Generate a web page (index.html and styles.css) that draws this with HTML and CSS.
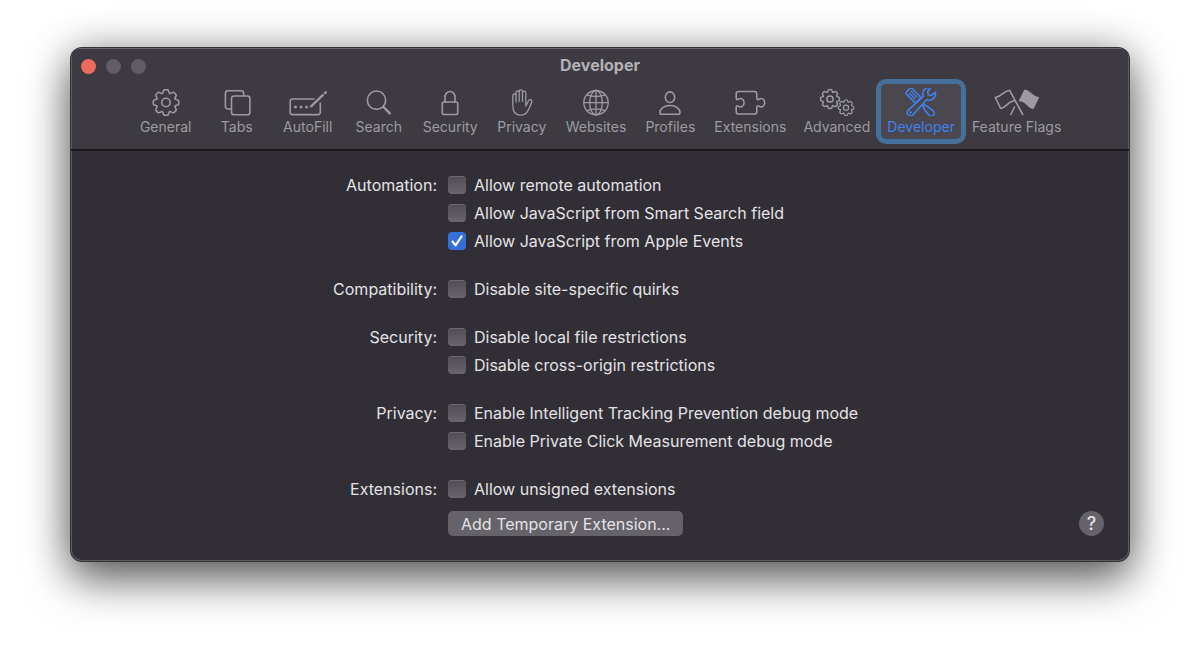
FILE: index.html
```
<!DOCTYPE html>
<html lang="en">
<head>
    <meta charset="UTF-8">
    <meta name="viewport" content="width=device-width, initial-scale=1.0">
    <title>Developer</title>
    <link rel="stylesheet" href="styles.css">
</head>
<body>
    <!-- gear shape shared by General and Advanced -->
    <svg class="defs" width="0" height="0" aria-hidden="true">
        <defs>
            <path id="tooth" d="M-3.75-9.05C-2.65-9.5-3-12.3-1.7-12.6Q0-13 1.7-12.6C3-12.3 2.65-9.5 3.75-9.05"/>
            <g id="gear">
                <use href="#tooth"/>
                <use href="#tooth" transform="rotate(45)"/>
                <use href="#tooth" transform="rotate(90)"/>
                <use href="#tooth" transform="rotate(135)"/>
                <use href="#tooth" transform="rotate(180)"/>
                <use href="#tooth" transform="rotate(225)"/>
                <use href="#tooth" transform="rotate(270)"/>
                <use href="#tooth" transform="rotate(315)"/>
                <circle r="4.2"/>
            </g>
        </defs>
    </svg>

    <main class="window">
        <header class="titlebar">
            <div class="title-row">
                <div class="lights">
                    <button class="light close" aria-label="Close"></button>
                    <button class="light" aria-label="Minimize"></button>
                    <button class="light" aria-label="Zoom"></button>
                </div>
                <h1>Developer</h1>
            </div>
            <nav class="tabs">
                <button class="tab">
                    <svg width="40" height="28" viewBox="0 0 40 28"><use href="#gear" transform="translate(20 14.5)"/></svg>
                    <span>General</span>
                </button>
                <button class="tab">
                    <svg width="40" height="28" viewBox="0 0 40 28">
                        <path d="M14.5 21H11a2.6 2.6 0 0 1-2.6-2.6V5.4A2.6 2.6 0 0 1 11 2.8h13a2.6 2.6 0 0 1 2.6 2.6v2.6"/>
                        <rect x="14.5" y="8" width="18.4" height="18.8" rx="2.6"/>
                    </svg>
                    <span>Tabs</span>
                </button>
                <button class="tab">
                    <svg width="48" height="28" viewBox="0 0 48 28">
                        <path d="M30 11H8.500a2.300 2.300 0 0 0-2.300 2.300v11a2.300 2.300 0 0 0 2.300 2.300H34a2.300 2.300 0 0 0 2.300-2.300V15"/>
                        <path class="thick" d="M28 17.500L38.800 7.200M41 5.100l.8-.8"/>
                        <g class="solid"><circle cx="11.500" cy="19" r="1.500"/><circle cx="17" cy="19" r="1.500"/><circle cx="22.500" cy="19" r="1.500"/><path d="M25.500 19.700l1.300-3.200 2.200 2.200z"/></g>
                    </svg>
                    <span>AutoFill</span>
                </button>
                <button class="tab">
                    <svg width="40" height="28" viewBox="0 0 40 28">
                        <circle cx="17.500" cy="12.200" r="9.200"/>
                        <path class="thick" d="M24.500 19l6.300 6.400"/>
                    </svg>
                    <span>Search</span>
                </button>
                <button class="tab">
                    <svg width="40" height="28" viewBox="0 0 40 28">
                        <rect x="12.300" y="14" width="15.400" height="12.500" rx="1.800"/>
                        <path d="M15 14V9a5 5.500 0 0 1 10 0v5"/>
                    </svg>
                    <span>Security</span>
                </button>
                <button class="tab">
                    <svg width="40" height="28" viewBox="0 0 40 28">
                        <path class="thin" d="M10.800 17.500V7.600a1.600 1.600 0 0 1 3.200 0v6.500V4.600a1.600 1.600 0 0 1 3.200 0v8.800V3.500a1.600 1.600 0 0 1 3.300 0v9.900V4.800a1.600 1.600 0 0 1 3.300 0V18c1.200-1.700 1.800-4 2.800-5.500 1.200-1.700 3.700-.9 3.200 1-.7 2.800-2 5.600-3.300 8.200-1.600 3.400-4 5.500-7.700 5.500-5 0-8-3.400-8-9.700z"/>
                    </svg>
                    <span>Privacy</span>
                </button>
                <button class="tab">
                    <svg width="40" height="28" viewBox="0 0 40 28">
                        <g class="thin"><circle cx="20" cy="14.700" r="12.200"/><ellipse cx="20" cy="14.700" rx="6.300" ry="12.200"/>
                        <path d="M20 2.500v24.400M7.800 14.700h24.400M10.800 6.800q9.200 3.400 18.400 0M10.800 22.600q9.200-3.400 18.400 0"/></g>
                    </svg>
                    <span>Websites</span>
                </button>
                <button class="tab">
                    <svg width="40" height="28" viewBox="0 0 40 28">
                        <ellipse cx="20" cy="9.200" rx="4.700" ry="5.300"/>
                        <path d="M10 24.500c0-3.500 4-7 10-7s10 3.500 10 7c0 1.200-.6 1.800-1.800 1.800H11.800c-1.200 0-1.800-.6-1.800-1.800z"/>
                    </svg>
                    <span>Profiles</span>
                </button>
                <button class="tab">
                    <svg width="48" height="28" viewBox="0 0 48 28">
                        <path d="M12.500 3.500h16a2.300 2.300 0 0 1 2.300 2.300v4.400c0 1.400 1 1.800 2 1.100 2.500-1.900 5.900-.3 5.900 3.400s-3.400 5.300-5.900 3.400c-1-.7-2-.3-2 1.100v4.500a2.300 2.300 0 0 1-2.300 2.300h-16a2.300 2.300 0 0 1-2.300-2.300v-4.500c0-1.400 1-1.800 2-1.100 2.500 1.900 5.900.3 5.900-3.400s-3.400-5.300-5.900-3.400c-1 .7-2 .3-2-1.100V5.800a2.300 2.300 0 0 1 2.300-2.300z"/>
                    </svg>
                    <span>Extensions</span>
                </button>
                <button class="tab">
                    <svg class="heavy" width="48" height="28" viewBox="0 0 48 28">
                        <use href="#gear" transform="translate(17 11) scale(.74)"/>
                        <use href="#gear" transform="translate(33 19.700) scale(.61)"/>
                    </svg>
                    <span>Advanced</span>
                </button>
                <button class="tab active" aria-current="page">
                    <svg width="48" height="28" viewBox="0 0 48 28">
                        <g transform="translate(23.500 14.500) rotate(45)">
                            <path d="M-15.500-4H-5.500Q-3-4-3-1.500V1.500Q-3 4-5.500 4H-15.500Q-17.500 4-17.500 2V-2Q-17.500-4-15.500-4zM-3-1H5L8-2.200L15-3Q18-3 18 0T15 3L8 2.200L5 1H-3z"/>
                            <path class="thin" d="M-14.500-1.300h8M-14.500 1.300h8"/>
                        </g>
                        <g transform="translate(23.500 14.500) rotate(-45)">
                            <path class="wrench" d="M17.700-3.300L12.800-2.700L11 0L12.800 2.700L17.700 3.300A6.400 6.400 0 0 1 6.300 2.400L-14 3.300A3.300 3.300 0 0 1-14-3.300L6.300-2.400A6.400 6.400 0 0 1 17.700-3.300z"/>
                            <circle class="solid" cx="-14" r="1.200"/>
                        </g>
                    </svg>
                    <span>Developer</span>
                </button>
                <button class="tab">
                    <svg width="48" height="28" viewBox="0 0 48 28">
                        <path d="M29.700 26.500L16.700 2.500C11.500 1.700 9.500 8.500 2.300 9.500L7.700 20.500C14 19.500 15 12.700 22 12.800"/>
                        <path d="M21.500 19l-3.700 7.500"/>
                        <path class="solid" d="M31.300 1.800C36.500 1 38.500 8 46.300 9.200L40.500 21C34 20 33 13 25.500 13.200z"/>
                    </svg>
                    <span>Feature Flags</span>
                </button>
            </nav>
        </header>

        <form class="settings">
            <fieldset class="group" aria-labelledby="automation">
                <div class="group-name" id="automation">Automation:</div>
                <div class="options">
                    <label><input type="checkbox">Allow remote automation</label>
                    <label><input type="checkbox">Allow JavaScript from Smart Search field</label>
                    <label><input type="checkbox" checked>Allow JavaScript from Apple Events</label>
                </div>
            </fieldset>
            <fieldset class="group" aria-labelledby="compatibility">
                <div class="group-name" id="compatibility">Compatibility:</div>
                <div class="options">
                    <label><input type="checkbox">Disable site-specific quirks</label>
                </div>
            </fieldset>
            <fieldset class="group" aria-labelledby="security">
                <div class="group-name" id="security">Security:</div>
                <div class="options">
                    <label><input type="checkbox">Disable local file restrictions</label>
                    <label><input type="checkbox">Disable cross-origin restrictions</label>
                </div>
            </fieldset>
            <fieldset class="group" aria-labelledby="privacy">
                <div class="group-name" id="privacy">Privacy:</div>
                <div class="options">
                    <label><input type="checkbox">Enable Intelligent Tracking Prevention debug mode</label>
                    <label><input type="checkbox">Enable Private Click Measurement debug mode</label>
                </div>
            </fieldset>
            <fieldset class="group" aria-labelledby="extensions">
                <div class="group-name" id="extensions">Extensions:</div>
                <div class="options">
                    <label><input type="checkbox">Allow unsigned extensions</label>
                    <div class="actions">
                        <button type="button" class="add-btn">Add Temporary Extension...</button>
                        <button type="button" class="help-btn" aria-label="Help">?</button>
                    </div>
                </div>
            </fieldset>
        </form>
    </main>
</body>
</html>
```
FILE: styles.css
```
* {
    box-sizing: border-box;
}
body {
    margin: 0;
    padding: 48px 71px 94px;
    background: #fff;
    font-family: Inter, "Liberation Sans", sans-serif;
    color: #e4e2e6;
}
button {
    font-family: inherit;
    border: none;
    padding: 0;
    background: none;
    color: inherit;
}
.defs {
    position: absolute;
}
.window {
    background: #312e35;
    border-radius: 11px;
    overflow: hidden;
    box-shadow: inset 0 0 0 1px #5d5b60, 0 0 0 1px #333, 0 20px 44px rgba(0,0,0,0.55), 0 0 40px rgba(0,0,0,0.3);
}
.titlebar {
    background: #3d3a41;
    border-bottom: 2px solid #1b191d;
    box-shadow: inset 0 1px 0 #69676c, inset 1px 0 0 #5d5b60, inset -1px 0 0 #5d5b60;
    padding-bottom: 10px;
}
.title-row {
    display: grid;
    grid-template-columns: 1fr auto 1fr;
    align-items: center;
    height: 36px;
    padding: 0 10px;
}
.lights {
    display: flex;
    gap: 10px;
}
.light {
    width: 15px;
    height: 15px;
    border-radius: 50%;
    background: #605d64;
}
.close {
    background: #ed6a5e;
}
h1 {
    margin: 0;
    padding-bottom: 2px;
    font-size: 16px;
    font-weight: 700;
    line-height: 20px;
    color: #b3b1b6;
}
.tabs {
    display: flex;
    justify-content: center;
    gap: 5px;
}
.tab {
    display: flex;
    flex-direction: column;
    align-items: center;
    gap: 3px;
    min-width: 66px;
    padding: 4px 6px 4px;
    border-radius: 5px;
    font-size: 14px;
    line-height: 16px;
    white-space: nowrap;
    color: #9d9aa1;
}
.tab svg {
    display: block;
    fill: none;
    stroke: currentColor;
    stroke-width: 1.6;
    stroke-linecap: round;
    stroke-linejoin: round;
}
.tab .heavy {
    stroke-width: 2;
}
.tab .thin {
    stroke-width: 1.3;
}
.tab .thick {
    stroke-width: 2.4;
}
.tab .solid {
    fill: currentColor;
    stroke: none;
}
.tab.active {
    color: #3f82f0;
    background: #4a474e;
    outline: 5px solid #44709b;
}
.tab .wrench {
    fill: #4a474e;
}
.settings {
    padding: 20px 25px 25px 0;
}
.group {
    display: grid;
    grid-template-columns: 366px 1fr;
    column-gap: 11px;
    margin: 0 0 20px;
    padding: 0;
    border: none;
    min-width: 0;
    font-size: 16px;
    line-height: 28px;
}
.group:last-child {
    margin-bottom: 0;
}
.group-name {
    text-align: right;
}
.options label {
    display: flex;
    align-items: center;
    gap: 8px;
}
input[type="checkbox"] {
    appearance: none;
    width: 18px;
    height: 18px;
    margin: 0;
    border-radius: 4px;
    background: linear-gradient(#504d54, #68656c);
    box-shadow: inset 0 1px 0 #6c6970;
}
input[type="checkbox"]:checked {
    background: url("data:image/svg+xml,%3Csvg xmlns='http://www.w3.org/2000/svg' viewBox='0 0 18 18'%3E%3Cpath d='M4.500 9.500l3 3.800 6-8.800' fill='none' stroke='white' stroke-width='2.200' stroke-linecap='round' stroke-linejoin='round'/%3E%3C/svg%3E"), #3470d8;
    box-shadow: none;
}
.actions {
    display: flex;
    justify-content: space-between;
    align-items: center;
    padding-top: 8px;
}
.add-btn {
    height: 25px;
    padding: 0 13px;
    border-radius: 5px;
    background: #656269;
    font-size: 16px;
    line-height: 24px;
}
.help-btn {
    width: 25px;
    height: 25px;
    border-radius: 50%;
    background: #656269;
    font-size: 18px;
    font-weight: 500;
    line-height: 25px;
}
```
